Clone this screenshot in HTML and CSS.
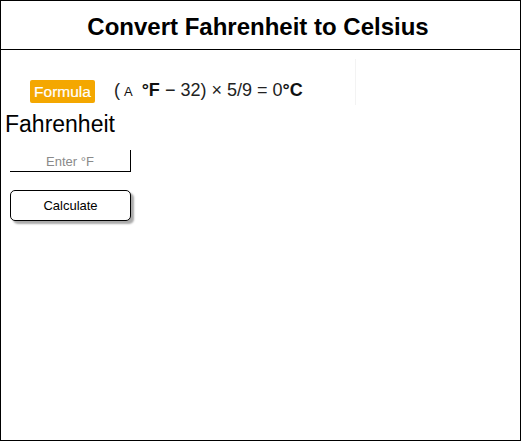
FILE: index.html
```html
<!DOCTYPE html>
<html>
<head>
<meta charset="utf-8">
<link rel="stylesheet" href="styles.css">
</head>
<body>
<div class="frame">
  <header class="header"><h1 class="title">Convert Fahrenheit to Celsius</h1></header>
  <main class="content">
    <div class="formula">
      <span class="badge">Formula</span>
      <span class="expr"><span class="paren">(</span><span class="small-a">A</span><b>°F</b> − 32) × 5/9 = 0<b>°C</b></span>
    </div>
    <label class="label" for="f">Fahrenheit</label>
    <input class="field" id="f" type="text" placeholder="Enter °F">
    <button class="btn" type="button">Calculate</button>
  </main>
</div>
</body>
</html>
```

FILE: styles.css
```css
html, body {
  margin: 0;
  padding: 0;
  background: #fff;
}
body {
  font-family: "Liberation Sans", Arial, sans-serif;
  color: #000;
}
.frame {
  box-sizing: border-box;
  width: 521px;
  height: 441px;
  border: 1px solid #000;
  display: flex;
  flex-direction: column;
}
.header {
  height: 48px;
  border-bottom: 1px solid #000;
  display: flex;
  align-items: center;
  justify-content: center;
  padding-right: 5px;
}
.title {
  margin: 0;
  font-size: 24px;
  font-weight: bold;
  line-height: 1;
  padding-top: 4px;
}
.content {
  display: flex;
  flex-direction: column;
  align-items: flex-start;
  padding: 9px 0 0 3px;
}
.formula {
  box-sizing: border-box;
  width: 336px;
  height: 46px;
  margin-left: 16px;
  border-right: 1px solid #f3f3f3;
  display: flex;
  align-items: flex-end;
  padding: 0 0 2px 10px;
}
.badge {
  display: inline-block;
  background: #f4a700;
  color: #fff;
  font-size: 15.5px;
  line-height: 23px;
  height: 23px;
  border-radius: 2px;
  width: 65px;
  text-align: center;
  -webkit-text-stroke: 0.2px #fff;
}
.expr {
  margin-left: 19px;
  font-size: 18px;
  color: #222;
  line-height: 23px;
  white-space: nowrap;
}
.paren { margin-right: 4px; }
.small-a {
  font-size: 13px;
  margin-right: 9px;
  color: #111;
}
.expr b { color: #111; }
.label {
  font-size: 23px;
  line-height: 28px;
  margin-top: 5px;
  margin-left: 1px;
}
.field {
  box-sizing: border-box;
  width: 121px;
  height: 22px;
  margin: 12px 0 0 6px;
  border: none;
  border-right: 1px solid #000;
  border-bottom: 1px solid #000;
  padding: 2px 0 0;
  font-family: "Liberation Sans", Arial, sans-serif;
  font-size: 13px;
  text-align: center;
  outline: none;
  background: transparent;
}
.field::placeholder { color: #8a8a8a; }
.btn {
  box-sizing: border-box;
  width: 121px;
  height: 31px;
  margin: 18px 0 0 6px;
  background: #fff;
  border: 1px solid #000;
  border-radius: 5px;
  box-shadow: 3px 3px 2px #aaa;
  font-family: "Liberation Sans", Arial, sans-serif;
  font-size: 13px;
  color: #000;
  padding: 0;
}
```
